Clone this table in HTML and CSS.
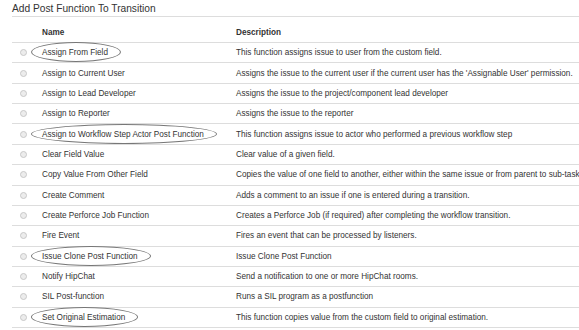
FILE: index.html
```html
<!DOCTYPE html>
<html lang="en">
<head>
  <meta charset="UTF-8" />
  <title>Add Post Function To Transition</title>
  <link rel="stylesheet" href="styles.css">
</head>
<body>
  <div class="page">
    <h2 class="page-title">Add Post Function To Transition</h2>
    <table class="functions">
      <thead>
        <tr>
          <th class="col-radio"></th>
          <th class="col-name">Name</th>
          <th class="col-desc">Description</th>
        </tr>
      </thead>
      <tbody id="rows"></tbody>
    </table>
  </div>

  <script>
    const functions = [
      { name: "Assign From Field", desc: "This function assigns issue to user from the custom field.", mark: 1 },
      { name: "Assign to Current User", desc: "Assigns the issue to the current user if the current user has the 'Assignable User' permission." },
      { name: "Assign to Lead Developer", desc: "Assigns the issue to the project/component lead developer" },
      { name: "Assign to Reporter", desc: "Assigns the issue to the reporter" },
      { name: "Assign to Workflow Step Actor Post Function", desc: "This function assigns issue to actor who performed a previous workflow step", mark: 1 },
      { name: "Clear Field Value", desc: "Clear value of a given field." },
      { name: "Copy Value From Other Field", desc: "Copies the value of one field to another, either within the same issue or from parent to sub-task" },
      { name: "Create Comment", desc: "Adds a comment to an issue if one is entered during a transition." },
      { name: "Create Perforce Job Function", desc: "Creates a Perforce Job (if required) after completing the workflow transition." },
      { name: "Fire Event", desc: "Fires an event that can be processed by listeners." },
      { name: "Issue Clone Post Function", desc: "Issue Clone Post Function", mark: 1 },
      { name: "Notify HipChat", desc: "Send a notification to one or more HipChat rooms." },
      { name: "SIL Post-function", desc: "Runs a SIL program as a postfunction" },
      { name: "Set Original Estimation", desc: "This function copies value from the custom field to original estimation.", mark: 1 },
    ];

    const rows = document.getElementById('rows');
    functions.forEach((fn, i) => {
      const tr = document.createElement('tr');
      tr.innerHTML = `
        <td class="col-radio"><input type="radio" name="postFunction" id="fn${i}"></td>
        <td class="col-name"><label for="fn${i}" class="${fn.mark ? 'marked' : ''}">${fn.name}</label></td>
        <td class="col-desc">${fn.desc}</td>
      `;
      rows.appendChild(tr);
    });
  </script>
</body>
</html>
```

FILE: styles.css
```css
html, body {
  margin: 0;
  padding: 0;
  background: #fff;
  overflow: hidden;
}
body {
  font-family: "Liberation Sans", Arial, sans-serif;
  color: #333;
  font-size: 8.2px;
}
.page {
  padding: 3px 0 0 12px;
}
.page-title {
  margin: 0;
  font-size: 10.2px;
  font-weight: normal;
  line-height: 12px;
  height: 13px;
  border-bottom: 1px solid #ddd;
  width: 640px;
}
.functions {
  border-collapse: collapse;
  width: 640px;
  table-layout: fixed;
}
.functions th {
  height: 20px;
  text-align: left;
  vertical-align: bottom;
  font-weight: bold;
  padding: 0 0 5px 0;
  border-bottom: 1px solid #ddd;
}
.functions td {
  height: 19.36px;
  padding: 0;
  border-bottom: 1px solid #ddd;
  white-space: nowrap;
  vertical-align: middle;
}
.col-radio {
  width: 30px;
}
.col-name {
  width: 194px;
}
td.col-radio {
  padding-left: 8px;
}
input[type="radio"] {
  appearance: none;
  width: 7px;
  height: 7px;
  margin: 0;
  display: block;
  border-radius: 50%;
  border: 1px solid #c8c8c8;
  background: #ececec;
}
label {
  position: relative;
  display: inline-block;
}
/* circled entries */
label.marked::after {
  content: "";
  position: absolute;
  left: -11px;
  right: -13px;
  top: -6px;
  bottom: -5px;
  border: 1px solid #777;
  border-radius: 50%;
}
```
